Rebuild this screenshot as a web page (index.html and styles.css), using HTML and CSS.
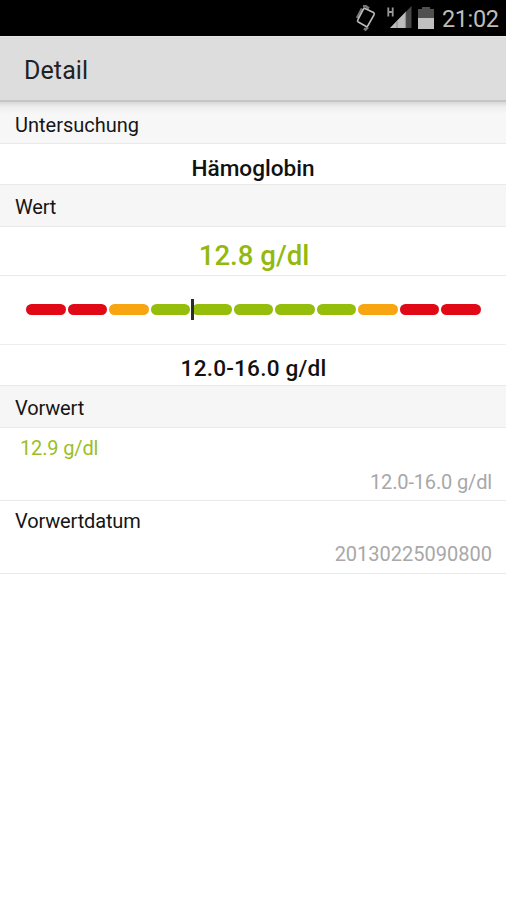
FILE: index.html
```
<!DOCTYPE html>
<html lang="de">
<head>
<meta charset="UTF-8">
<title>Detail</title>
<link rel="stylesheet" href="styles.css">
</head>
<body>

<div class="statusbar">
  <!-- Vibration -->
  <svg class="icon-rotate" width="24" height="28" viewBox="0 0 24 28">
    <path d="M10 1.5L12.5 1L16 3.5M9 3.5L4 13M11 23.5L12.5 24.5L15 22" fill="none" stroke="#777" stroke-width="2.6"/>
    <path d="M12 3.5L20.5 7.5Q21.8 8.3 21 9.8L15 20.5Q14.2 22 12.8 21.3L5.3 17Q4 16.2 4.8 14.8L10.3 4.5Q11 3 12 3.5Z" fill="#000" stroke="#bbb" stroke-width="1.6"/>
  </svg>
  <!-- Empfang -->
  <svg class="icon-signal" width="26" height="24" viewBox="0 0 26 24">
    <path d="M2.3 1.5V10.5M6.7 1.5V10.5M2.3 6H6.7" fill="none" stroke="#999" stroke-width="1.8"/>
    <path d="M25.5 0V22H4Z" fill="#484848"/>
    <path d="M20 5.6V22H4Z" fill="#bdbdbd"/>
    <path d="M11 15V22M19.5 6.5V22" stroke="#909090" stroke-width="1.2"/>
  </svg>
  <!-- Akku -->
  <svg class="icon-battery" width="16" height="22" viewBox="0 0 16 22">
    <path d="M4 0H12V2H16V11H0V2H4Z" fill="#505050"/>
    <path d="M0 11H16V22H0Z" fill="#c0c0c0"/>
  </svg>
  <span class="clock">21:02</span>
</div>

<div class="header">Detail</div>

<div class="section first"><span>Untersuchung</span></div>
<div class="value name"><span>Hämoglobin</span></div>

<div class="section wert"><span>Wert</span></div>
<div class="value result"><span>12.8 g/dl</span></div>
<div class="scale">
  <div class="bar">
    <div class="seg red"></div>
    <div class="seg red"></div>
    <div class="seg orange"></div>
    <div class="seg green"></div>
    <div class="seg green"></div>
    <div class="seg green"></div>
    <div class="seg green"></div>
    <div class="seg green"></div>
    <div class="seg orange"></div>
    <div class="seg red"></div>
    <div class="seg red"></div>
    <div class="marker"></div>
  </div>
</div>
<div class="value range"><span>12.0-16.0 g/dl</span></div>

<div class="section vorwert"><span>Vorwert</span></div>
<div class="item">
  <div class="old">12.9 g/dl</div>
  <div class="info">12.0-16.0 g/dl</div>
</div>
<div class="item">
  <div class="label">Vorwertdatum</div>
  <div class="info date">20130225090800</div>
</div>

</body>
</html>
```
FILE: styles.css
```
* { box-sizing: border-box; }
body { margin: 0; font-family: Roboto, sans-serif; background: #fff; color: #151515; }

.statusbar { height: 36px; background: #000; display: flex; justify-content: flex-end; align-items: flex-start; padding-right: 8px; color: #bdbdbd; }
.icon-rotate { margin: 5px 9px 0 0; }
.icon-signal { margin: 6px 6px 0 0; }
.icon-battery { margin: 7px 8px 0 0; }
.clock { font-size: 23.5px; line-height: 38px; width: 56px; letter-spacing: -0.4px; white-space: nowrap; }

.header { height: 66px; background: #ddd; border-top: 1px solid #e6e6e6; border-bottom: 2px solid #c6c6c6; padding-left: 24px; font-size: 25px; line-height: 67px; letter-spacing: 0.1px; color: #222; }

.section { height: 42px; background: #f6f6f6; border-bottom: 1px solid #e9e9e9; padding-left: 15px; font-size: 20px; line-height: 44px; }
.section.first { background: linear-gradient(#d8d8d8, #efefef 5px, #f7f7f7 12px); line-height: 46px; }
.section.wert, .section.vorwert { letter-spacing: -0.15px; }

.value { height: 41px; border-bottom: 1px solid #e9e9e9; text-align: center; font-size: 22.6px; line-height: 49px; font-weight: 500; color: #111; }
.value.range { line-height: 48px; letter-spacing: 0.2px; padding-left: 1px; }
.value.result { height: 49px; font-size: 27.6px; line-height: 57px; padding-left: 2px; color: #93b90f; }

.scale { height: 69px; border-bottom: 1px solid #eee; padding: 28px 25px 0 26px; }
.bar { position: relative; display: flex; gap: 2px; }
.seg { flex: 1; height: 11px; border-radius: 6px; }
.red { background: #e20917; }
.orange { background: #f8a512; }
.green { background: #94bd0c; }
/* aktueller Messwert */
.marker { position: absolute; left: 165px; top: -5px; width: 3px; height: 21px; background: #29301f; }

.item { height: 73px; border-bottom: 1px solid #e9e9e9; padding: 0 14px 0 15px; font-size: 20px; letter-spacing: -0.15px; }
.old { padding-left: 5px; line-height: 40px; color: #9abf22; }
.label { line-height: 40px; }
.info { text-align: right; line-height: 28px; color: #a8a8a8; }
.info.date { letter-spacing: 0; line-height: 27px; }
```
